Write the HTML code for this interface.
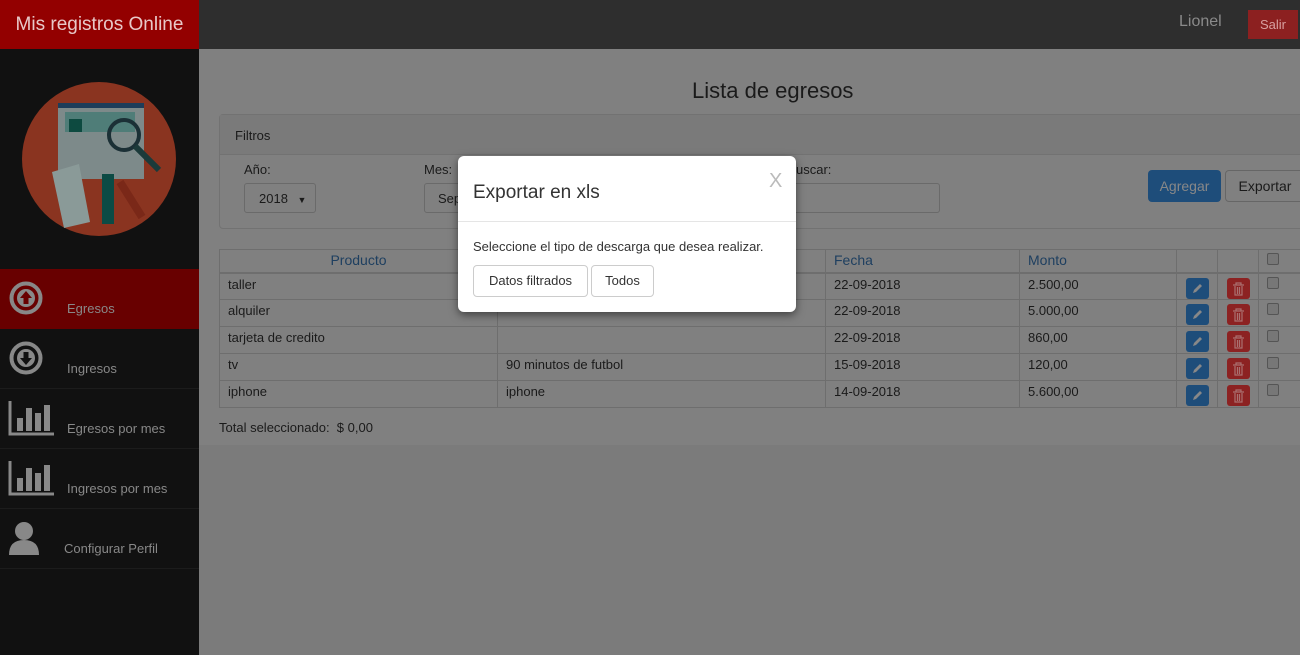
<!DOCTYPE html>
<html><head><meta charset="utf-8"><style>
*{box-sizing:border-box;margin:0;padding:0}
body{width:1300px;height:655px;overflow:hidden;background:#7b7b7b;font-family:"Liberation Sans",sans-serif;font-size:13px;color:#1a1a1a;position:relative}
.top{position:absolute;left:0;top:0;width:1300px;height:49px;background:#2e2e2e}
.brand{position:absolute;left:0;top:0;width:199px;height:49px;background:#930000;color:#e8c8c8;font-size:19px;line-height:49px;text-align:center}
.user{position:absolute;left:1179px;top:13px;font-size:16px;color:#8a8a8a}
.salir{position:absolute;left:1248px;top:10px;width:50px;height:29px;background:#8c2020;color:#d8a0a0;font-size:13px;line-height:29px;text-align:center}
.side{position:absolute;left:0;top:49px;width:199px;height:606px;background:#111}
.circle{position:absolute;left:22px;width:154px;height:154px;border-radius:50%;background:#8a3420}
.item{position:absolute;left:0;width:199px;height:60px;border-bottom:1px solid #1c1c1c;color:#888;font-size:13px}
.item span{position:absolute;top:32px}
.main{position:absolute;left:199px;top:49px;width:1101px;height:396px;background:#808080}
.panel{position:absolute;left:219px;top:114px;width:1090px;height:115px;border:1px solid #727272;border-radius:4px}
.ph{height:40px;border-bottom:1px solid #727272;background:#7a7a7a;padding:13px 15px;color:#1a1a1a}
.sel{position:absolute;border:1px solid #6a6a6a;border-radius:3px;height:30px;white-space:nowrap}
table{position:absolute;left:219px;top:249px;border-collapse:collapse;font-size:13px;table-layout:fixed;width:1100px}
td,th{border:1px solid #6e6e6e;height:27px;padding:0 8px;text-align:left;vertical-align:top;padding-top:3px;font-weight:normal;white-space:nowrap}
th{height:23px;color:#1e3f60;font-size:14px;padding-top:2px;border-bottom:2px solid #6e6e6e}
.be,.bd{display:block;width:23px;height:21px;border-radius:3px;margin:1px 0 0 1px;position:relative}
.be{background:#1e4d7a}
.bd{background:#8c2222}
.be svg,.bd svg{position:absolute;left:5px;top:4px}
.cb{display:inline-block;width:12px;height:12px;border:1px solid #555;border-radius:2px;background:#777}
.modal{position:absolute;left:458px;top:156px;width:338px;height:156px;background:#fff;border-radius:6px;box-shadow:0 3px 9px rgba(0,0,0,.5)}
.mb{position:absolute;top:109px;height:32px;border:1px solid #ccc;border-radius:4px;color:#333;font-size:13px;line-height:30px;text-align:center}
</style></head><body>
<div class="top"><div class="brand">Mis registros Online</div><div class="user">Lionel</div><div class="salir">Salir</div></div>
<div class="side">
<div class="circle" style="top:33px"></div>
<svg style="position:absolute;left:22px;top:33px" width="154" height="154"><rect x="36" y="21" width="86" height="76" fill="#7d8a8a"/><rect x="36" y="21" width="86" height="5" fill="#1d3d5a"/><rect x="43" y="30" width="70" height="20" fill="#4f7d78"/><rect x="47" y="37" width="13" height="13" fill="#0d4a40"/><circle cx="102" cy="53" r="15" fill="none" stroke="#1b3036" stroke-width="4"/><line x1="113" y1="64" x2="137" y2="88" stroke="#1b3a3a" stroke-width="6"/><polygon points="30,90 57,82 68,140 42,146" fill="#8a9a98"/><rect x="80" y="92" width="12" height="50" fill="#0c4b45"/><line x1="98" y1="100" x2="120" y2="135" stroke="#7a2818" stroke-width="8"/></svg>
<div class="item" style="top:220px;background:#680000;border:none"><svg style="position:absolute;left:9px;top:12px" width="34" height="34"><circle cx="17" cy="17" r="14.5" fill="none" stroke="#888" stroke-width="4"/><circle cx="17" cy="17" r="9" fill="#888"/><path d="M17 10 L23 17 H19.5 V23 H14.5 V17 H11Z" fill="#680000"/></svg><span style="left:67px">Egresos</span></div>
<div class="item" style="top:280px"><svg style="position:absolute;left:9px;top:12px" width="34" height="34"><circle cx="17" cy="17" r="14.5" fill="none" stroke="#888" stroke-width="4"/><circle cx="17" cy="17" r="9" fill="#888"/><path d="M17 24 L23 17 H19.5 V11 H14.5 V17 H11Z" fill="#111"/></svg><span style="left:67px">Ingresos</span></div>
<div class="item" style="top:340px"><svg style="position:absolute;left:8px;top:10px" width="48" height="38"><path d="M2 2 V35 H46" stroke="#888" stroke-width="3" fill="none"/><rect x="9" y="19" width="6" height="13" fill="#888"/><rect x="18" y="9" width="6" height="23" fill="#888"/><rect x="27" y="14" width="6" height="18" fill="#888"/><rect x="36" y="6" width="6" height="26" fill="#888"/></svg><span style="left:67px">Egresos por mes</span></div>
<div class="item" style="top:400px"><svg style="position:absolute;left:8px;top:10px" width="48" height="38"><path d="M2 2 V35 H46" stroke="#888" stroke-width="3" fill="none"/><rect x="9" y="19" width="6" height="13" fill="#888"/><rect x="18" y="9" width="6" height="23" fill="#888"/><rect x="27" y="14" width="6" height="18" fill="#888"/><rect x="36" y="6" width="6" height="26" fill="#888"/></svg><span style="left:67px">Ingresos por mes</span></div>
<div class="item" style="top:460px"><svg style="position:absolute;left:8px;top:12px" width="34" height="36"><circle cx="16" cy="10" r="9" fill="#888"/><path d="M1 34 Q1 19 16 19 Q31 19 31 34Z" fill="#888"/></svg><span style="left:64px">Configurar Perfil</span></div>
</div>
<div class="main"></div>
<div style="position:absolute;left:692px;top:78px;font-size:22px;color:#1a1a1a">Lista de egresos</div>
<div class="panel"><div class="ph">Filtros</div></div>
<div style="position:absolute;left:244px;top:162px">Año:</div>
<div class="sel" style="left:244px;top:183px;width:72px;padding:7px 14px">2018 <span style="font-size:9px;margin-left:6px">▼</span></div>
<div style="position:absolute;left:424px;top:162px">Mes:</div>
<div class="sel" style="left:424px;top:183px;width:60px;padding:7px 13px">Sep</div>
<div style="position:absolute;left:796px;top:162px">uscar:</div>
<div class="sel" style="left:780px;top:183px;width:160px"></div>
<div style="position:absolute;left:1148px;top:170px;width:73px;height:32px;background:#1e4d7a;border-radius:4px;color:#888;line-height:32px;text-align:center;font-size:14px">Agregar</div>
<div style="position:absolute;left:1225px;top:170px;width:80px;height:32px;border:1px solid #666;border-radius:4px;line-height:30px;text-align:center;font-size:14px">Exportar</div>
<table>
<colgroup><col style="width:278px"><col style="width:328px"><col style="width:194px"><col style="width:157px"><col style="width:41px"><col style="width:41px"><col style="width:61px"></colgroup>
<tr><th style="text-align:center">Producto</th><th></th><th>Fecha</th><th>Monto</th><th></th><th></th><th><span class="cb"></span></th></tr>
<tr><td>taller</td><td></td><td>22-09-2018</td><td>2.500,00</td><td><span class="be"><svg width="13" height="13"><path d="M2 11 L3 8 L9 2 L11 4 L5 10Z" fill="#888"/></svg></span></td><td><span class="bd"><svg width="13" height="14"><path d="M1 3H12M4 3V1H9V3M3 4V13H10V4M5.5 5V12M7.5 5V12" stroke="#aa7070" stroke-width="1.2" fill="none"/></svg></span></td><td><span class="cb"></span></td></tr>
<tr><td>alquiler</td><td></td><td>22-09-2018</td><td>5.000,00</td><td><span class="be"><svg width="13" height="13"><path d="M2 11 L3 8 L9 2 L11 4 L5 10Z" fill="#888"/></svg></span></td><td><span class="bd"><svg width="13" height="14"><path d="M1 3H12M4 3V1H9V3M3 4V13H10V4M5.5 5V12M7.5 5V12" stroke="#aa7070" stroke-width="1.2" fill="none"/></svg></span></td><td><span class="cb"></span></td></tr>
<tr><td>tarjeta de credito</td><td></td><td>22-09-2018</td><td>860,00</td><td><span class="be"><svg width="13" height="13"><path d="M2 11 L3 8 L9 2 L11 4 L5 10Z" fill="#888"/></svg></span></td><td><span class="bd"><svg width="13" height="14"><path d="M1 3H12M4 3V1H9V3M3 4V13H10V4M5.5 5V12M7.5 5V12" stroke="#aa7070" stroke-width="1.2" fill="none"/></svg></span></td><td><span class="cb"></span></td></tr>
<tr><td>tv</td><td>90 minutos de futbol</td><td>15-09-2018</td><td>120,00</td><td><span class="be"><svg width="13" height="13"><path d="M2 11 L3 8 L9 2 L11 4 L5 10Z" fill="#888"/></svg></span></td><td><span class="bd"><svg width="13" height="14"><path d="M1 3H12M4 3V1H9V3M3 4V13H10V4M5.5 5V12M7.5 5V12" stroke="#aa7070" stroke-width="1.2" fill="none"/></svg></span></td><td><span class="cb"></span></td></tr>
<tr><td>iphone</td><td>iphone</td><td>14-09-2018</td><td>5.600,00</td><td><span class="be"><svg width="13" height="13"><path d="M2 11 L3 8 L9 2 L11 4 L5 10Z" fill="#888"/></svg></span></td><td><span class="bd"><svg width="13" height="14"><path d="M1 3H12M4 3V1H9V3M3 4V13H10V4M5.5 5V12M7.5 5V12" stroke="#aa7070" stroke-width="1.2" fill="none"/></svg></span></td><td><span class="cb"></span></td></tr>
</table>
<div style="position:absolute;left:219px;top:420px">Total seleccionado:&nbsp; $ 0,00</div>
<div class="modal">
<div style="position:absolute;left:15px;top:26px;font-size:19px;color:#333">Exportar en xls</div>
<div style="position:absolute;left:311px;top:14px;font-size:20px;color:#bbb">X</div>
<div style="position:absolute;left:0;top:65px;width:338px;border-top:1px solid #e5e5e5"></div>
<div style="position:absolute;left:15px;top:83px;font-size:13px;color:#333">Seleccione el tipo de descarga que desea realizar.</div>
<div class="mb" style="left:15px;width:115px">Datos filtrados</div>
<div class="mb" style="left:133px;width:63px">Todos</div>
</div>
</body></html>
